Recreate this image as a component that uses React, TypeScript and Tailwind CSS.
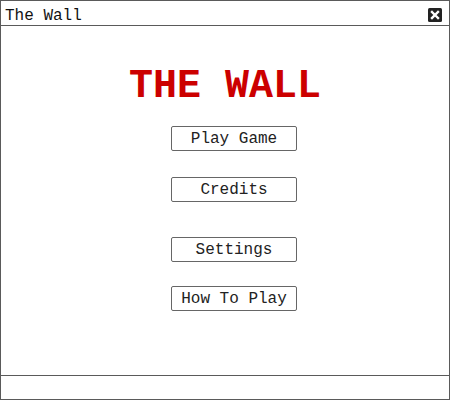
import React from "react";

const mono = { fontFamily: '"Liberation Mono", "Courier New", monospace' };

function MenuButton({ label, className }: { label: string; className: string }) {
  return (
    <button
      className={`self-start ml-[170px] w-[126px] h-[25px] border border-[#666] rounded-[2px] bg-white text-[16px] leading-[24px] text-[#222] text-center ${className}`}
      style={mono}
    >
      {label}
    </button>
  );
}

export default function App() {
  return (
    <div className="w-[450px] h-[400px] bg-white border border-[#5a5a5a] flex flex-col" style={mono}>
      <div className="h-[25px] shrink-0 border-b border-[#5a5a5a] flex items-start justify-between">
        <span className="pl-[4px] pt-[7px] text-[16px] leading-[16px] text-[#111]">The Wall</span>
        <div className="mt-[7px] mr-[7px] w-[14px] h-[14px]">
          <svg width="14" height="14" viewBox="0 0 14 14">
            <rect x="0" y="0" width="14" height="14" rx="1.5" fill="#222" />
            <path d="M4 4 L10 10 M10 4 L4 10" stroke="#fff" strokeWidth="2.4" strokeLinecap="square" />
          </svg>
        </div>
      </div>
      <div className="flex-1 flex flex-col items-center pt-[41px]">
        <div className="text-[40px] leading-[40px] font-bold text-[#cc0000]" style={mono}>
          THE WALL
        </div>
        <MenuButton label="Play Game" className="mt-[19px]" />
        <MenuButton label="Credits" className="mt-[26px]" />
        <MenuButton label="Settings" className="mt-[35px]" />
        <MenuButton label="How To Play" className="mt-[24px]" />
      </div>
      <div className="h-[24px] shrink-0 border-t border-[#5a5a5a]" />
    </div>
  );
}
